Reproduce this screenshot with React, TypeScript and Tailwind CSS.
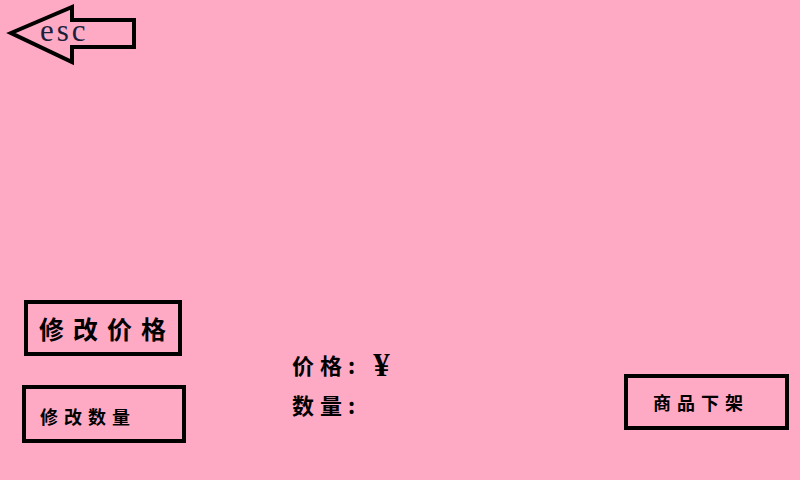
import React from "react";

const cjk = "[font-family:'Noto_Sans_CJK_SC',sans-serif]";
const serif = "[font-family:'Liberation_Serif',serif]";

function BackArrow() {
  return (
    <button className="relative block h-[68px] w-[140px]">
      <svg width="140" height="68" viewBox="0 0 140 68" className="absolute left-0 top-0">
        <polygon
          points="11,33 72,7 72,20 134,20 134,47 72,47 72,62"
          fill="none"
          stroke="#000"
          strokeWidth="4"
          strokeLinejoin="miter"
        />
      </svg>
      <span className={`${serif} absolute left-[40px] top-[15px] text-[31px] leading-none tracking-[3px] text-[#1b1f3a]`}>
        esc
      </span>
    </button>
  );
}

export default function App() {
  return (
    <div className="flex h-[480px] w-[800px] flex-col overflow-hidden bg-[#ffaac5] text-black">
      <header className="flex">
        <BackArrow />
      </header>

      <main className="flex flex-1 items-start">
        {/* 左侧按钮 */}
        <div className="flex flex-col pl-[22px]">
          <button
            className={`${cjk} mt-[232px] ml-[2px] flex h-[56px] w-[158px] items-center border-4 border-black pl-[11px] text-[25px] font-bold leading-none tracking-[9px]`}
          >
            修改价格
          </button>
          <button
            className={`${cjk} mt-[29px] flex h-[58px] w-[164px] items-center border-4 border-black pl-[14px] pt-[3px] text-[18px] font-bold leading-none tracking-[6px]`}
          >
            修改数量
          </button>
        </div>

        {/* 商品信息 */}
        <div className={`${cjk} ml-[106px] mt-[285px] flex flex-col gap-[18px] text-[22px] font-bold leading-none`}>
          <div className="flex h-[22px] items-center">
            <span className="tracking-[6px]">价格:</span>
            <span className={`${serif} ml-[12px] flex h-[22px] items-center pt-[3px] text-[33px] font-bold leading-none`}>¥</span>
          </div>
          <div className="flex h-[22px] items-center">
            <span className="tracking-[6px]">数量:</span>
          </div>
        </div>

        <button
          className={`${cjk} ml-auto mr-[11px] mt-[306px] flex h-[56px] w-[165px] items-center border-4 border-black pl-[25px] text-[18px] font-bold leading-none tracking-[6px]`}
        >
          商品下架
        </button>
      </main>
    </div>
  );
}
